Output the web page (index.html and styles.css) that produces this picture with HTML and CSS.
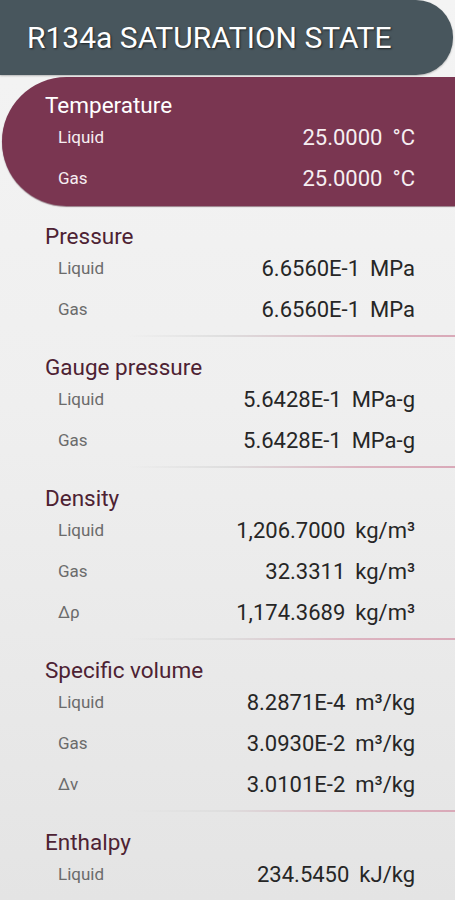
FILE: index.html
```html
<!DOCTYPE html>
<html>
<head>
<meta charset="utf-8">
<link rel="stylesheet" href="styles.css">
</head>
<body>
<header class="appbar"><h1 class="appbar-title">R134a SATURATION STATE</h1></header>
<main class="list">
  <section class="group group-active">
    <h2 class="group-title">Temperature</h2>
    <div class="row"><span class="label">Liquid</span><span class="value"><span class="num">25.0000</span><span class="unit">°C</span></span></div>
    <div class="row"><span class="label">Gas</span><span class="value"><span class="num">25.0000</span><span class="unit">°C</span></span></div>
  </section>
  <section class="group">
    <h2 class="group-title">Pressure</h2>
    <div class="row"><span class="label">Liquid</span><span class="value"><span class="num">6.6560E-1</span><span class="unit">MPa</span></span></div>
    <div class="row"><span class="label">Gas</span><span class="value"><span class="num">6.6560E-1</span><span class="unit">MPa</span></span></div>
  </section>
  <div class="sep"></div>
  <section class="group">
    <h2 class="group-title">Gauge pressure</h2>
    <div class="row"><span class="label">Liquid</span><span class="value"><span class="num">5.6428E-1</span><span class="unit">MPa-g</span></span></div>
    <div class="row"><span class="label">Gas</span><span class="value"><span class="num">5.6428E-1</span><span class="unit">MPa-g</span></span></div>
  </section>
  <div class="sep"></div>
  <section class="group">
    <h2 class="group-title">Density</h2>
    <div class="row"><span class="label">Liquid</span><span class="value"><span class="num">1,206.7000</span><span class="unit">kg/m³</span></span></div>
    <div class="row"><span class="label">Gas</span><span class="value"><span class="num">32.3311</span><span class="unit">kg/m³</span></span></div>
    <div class="row"><span class="label">Δρ</span><span class="value"><span class="num">1,174.3689</span><span class="unit">kg/m³</span></span></div>
  </section>
  <div class="sep"></div>
  <section class="group">
    <h2 class="group-title">Specific volume</h2>
    <div class="row"><span class="label">Liquid</span><span class="value"><span class="num">8.2871E-4</span><span class="unit">m³/kg</span></span></div>
    <div class="row"><span class="label">Gas</span><span class="value"><span class="num">3.0930E-2</span><span class="unit">m³/kg</span></span></div>
    <div class="row"><span class="label">Δv</span><span class="value"><span class="num">3.0101E-2</span><span class="unit">m³/kg</span></span></div>
  </section>
  <div class="sep"></div>
  <section class="group">
    <h2 class="group-title">Enthalpy</h2>
    <div class="row"><span class="label">Liquid</span><span class="value"><span class="num">234.5450</span><span class="unit">kJ/kg</span></span></div>
  </section>
</main>
</body>
</html>
```
FILE: styles.css
```css
html, body {
  margin: 0;
  padding: 0;
}
body {
  width: 455px;
  height: 900px;
  overflow: hidden;
  font-family: Roboto, "Noto Sans", sans-serif;
  background: linear-gradient(to bottom, #f4f4f4 0%, #efefef 45%, #e4e4e4 100%);
}
.appbar {
  width: 453px;
  height: 75px;
  box-sizing: border-box;
  background: #48565d;
  border-radius: 0 37px 37px 0;
  box-shadow: 0 1px 2px rgba(0, 0, 0, 0.25);
  display: flex;
  align-items: center;
  padding-left: 27px;
  position: relative;
  z-index: 1;
}
.appbar-title {
  margin: 0;
  font-size: 30px;
  font-weight: 400;
  color: #ffffff;
  text-shadow: 1px 1px 2px rgba(0, 0, 0, 0.6);
  letter-spacing: 0;
}
.list {
  padding-top: 2px;
}
.group {
  padding: 18.5px 40px 5.5px 45px;
}
.group-active {
  margin-left: 2px;
  padding: 16.5px 40px 7.5px 43px;
  background: #7a3651;
  border-radius: 64.5px 0 0 64.5px;
  box-shadow: 0 1px 1px rgba(60, 10, 30, 0.5);
}
.group-title {
  margin: 0;
  font-size: 22.5px;
  line-height: 23px;
  font-weight: 400;
  color: #4d2233;
}
.group-active .group-title {
  color: #ffffff;
}
.row {
  height: 41px;
  display: flex;
  align-items: center;
  justify-content: space-between;
  padding-left: 13px;
}
.label {
  font-size: 17px;
  color: #6b6b6b;
}
.value {
  display: flex;
  gap: 10px;
  font-size: 22px;
  color: #262626;
}
.group-active .label,
.group-active .value {
  color: #f6eef1;
}
.sep {
  height: 2px;
  margin-left: 128px;
  background: linear-gradient(to right, rgba(220, 220, 220, 0), #dedede 30%, #dcb4c0 70%, #d9a9b8 100%);
}
```
